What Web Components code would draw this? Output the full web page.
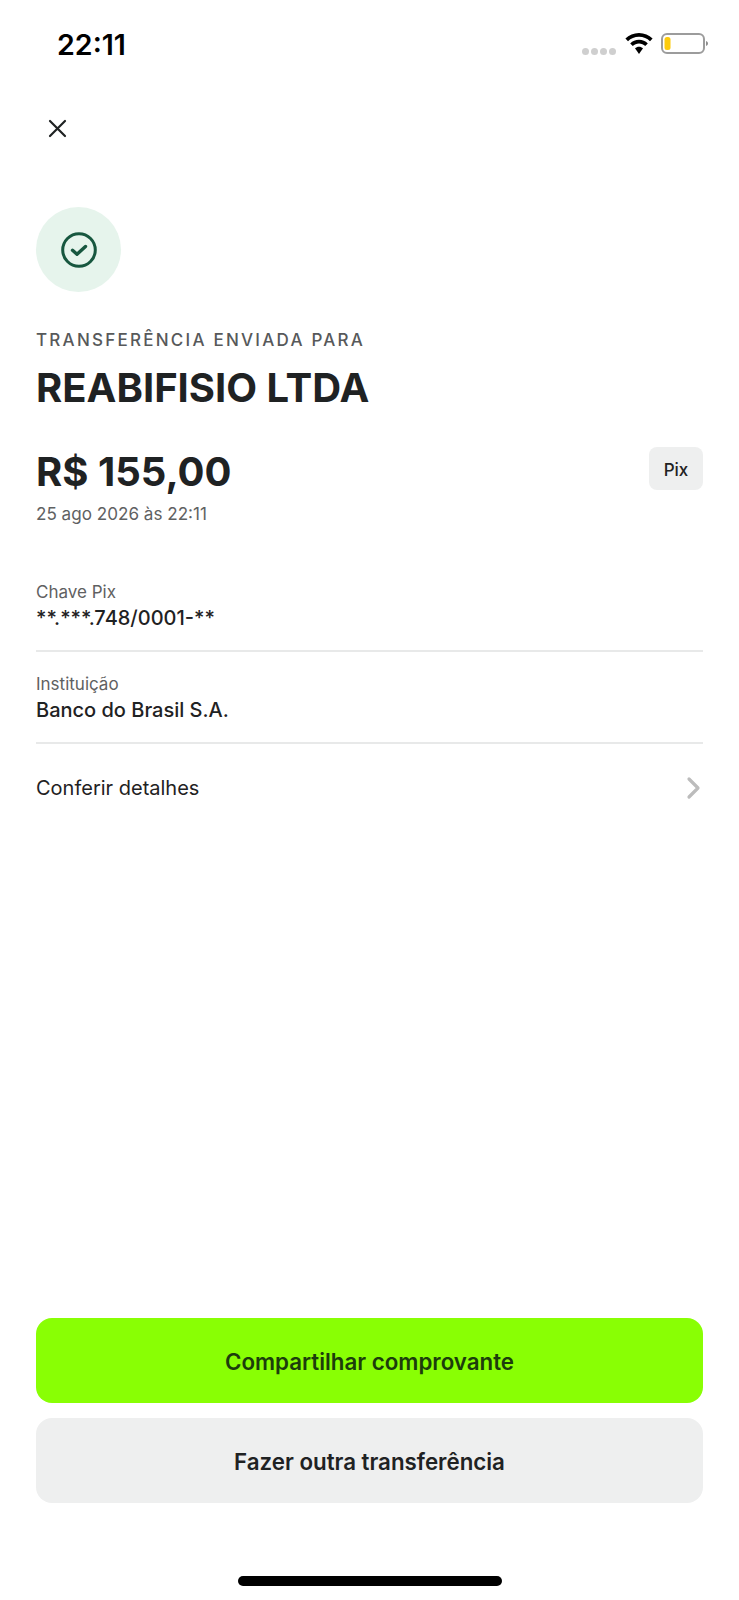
<!DOCTYPE html>
<html lang="pt-BR">
<head>
<meta charset="utf-8">
<title>Transferência enviada</title>
<style>
  html, body { margin: 0; background: #fff; }
  body { font-family: Inter, "Liberation Sans", sans-serif; color: #1f2223; }
</style>
</head>
<body>
<receipt-screen>
  <status-bar slot="status" time="22:11"></status-bar>
  <close-button slot="nav"></close-button>
  <success-badge></success-badge>
  <amount-summary label="Transferência enviada para" name="REABIFISIO LTDA" amount="R$ 155,00" date="25 ago 2026 às 22:11" tag="Pix"></amount-summary>
  <detail-row label="Chave Pix" value="**.***.748/0001-**"></detail-row>
  <detail-row label="Instituição" value="Banco do Brasil S.A."></detail-row>
  <link-row>Conferir detalhes</link-row>
  <action-button slot="actions" kind="primary">Compartilhar comprovante</action-button>
  <action-button slot="actions">Fazer outra transferência</action-button>
</receipt-screen>

<script>
const make = (html) => {
  const template = document.createElement("template");
  template.innerHTML = html;
  return template;
};

const screenTemplate = make(`
  <style>
    :host { display: flex; flex-direction: column; height: 1600px; box-sizing: border-box; overflow: hidden; }
    .nav { padding: 26px 36px 0; height: 70px; box-sizing: border-box; }
    .content { flex: 1; padding: 0 36px; display: flex; flex-direction: column; margin-top: 47px; }
    .actions { padding: 0 36px; display: flex; flex-direction: column; gap: 15px; }
    .home { height: 97px; display: flex; justify-content: center; align-items: flex-start; padding-top: 73px; box-sizing: border-box; }
    .home i { display: block; width: 264px; height: 10px; border-radius: 5px; background: #000; }
  </style>
  <slot name="status"></slot>
  <div class="nav"><slot name="nav"></slot></div>
  <div class="content"><slot></slot></div>
  <div class="actions"><slot name="actions"></slot></div>
  <div class="home"><i></i></div>
`);

class ReceiptScreen extends HTMLElement {
  constructor() {
    super();
    this.attachShadow({ mode: "open" }).appendChild(screenTemplate.content.cloneNode(true));
  }
}
customElements.define("receipt-screen", ReceiptScreen);

const statusTemplate = make(`
  <style>
    :host { display: flex; justify-content: space-between; align-items: flex-start; height: 90px; box-sizing: border-box; padding: 29px 31px 0 57px; }
    .time { font: 600 28.600px/32px Inter, "Liberation Sans", sans-serif; color: #000; }
    .icons { display: flex; align-items: flex-start; padding-top: 4px; }
    .dots { display: flex; gap: 2px; margin: 15px 9px 0 0; }
    .dots i { width: 7px; height: 7px; border-radius: 50%; background: #cfcfcf; }
    svg { display: block; }
    .wifi { margin-right: 8px; }
  </style>
  <span class="time"></span>
  <div class="icons">
    <div class="dots"><i></i><i></i><i></i><i></i></div>
    <svg class="wifi" width="28" height="21" viewBox="0 0 28 21" fill="#000">
      <path d="M14 0C8.700 0 3.900 2.100.4 5.600L3 8.200C5.800 5.400 9.700 3.700 14 3.700s8.200 1.700 11 4.500l2.600-2.600C24.100 2.100 19.300 0 14 0z"/>
      <path d="M14 6.800c-3.400 0-6.500 1.400-8.800 3.600l2.600 2.600c1.600-1.600 3.800-2.500 6.200-2.500s4.600.9 6.200 2.500l2.600-2.600c-2.300-2.200-5.400-3.600-8.800-3.600z"/>
      <path d="M14 13.700c-1.500 0-2.900.6-4 1.600l4 5.700 4-5.700c-1.100-1-2.500-1.600-4-1.600z"/>
    </svg>
    <svg width="47" height="21" viewBox="0 0 47 21">
      <rect x="1" y="1" width="42" height="19" rx="5" fill="none" stroke="#9c9c9c" stroke-width="2"/>
      <rect x="3.500" y="4" width="6" height="13" rx="2.500" fill="#fdcb0c"/>
      <path d="M45 8c1.300.4 2 1.300 2 2.500S46.300 12.600 45 13z" fill="#8e8e8e"/>
    </svg>
  </div>
`);

class StatusBar extends HTMLElement {
  constructor() {
    super();
    this.attachShadow({ mode: "open" }).appendChild(statusTemplate.content.cloneNode(true));
  }
  connectedCallback() {
    this.shadowRoot.querySelector(".time").textContent = this.getAttribute("time");
  }
}
customElements.define("status-bar", StatusBar);

const closeTemplate = make(`
  <style>
    :host { display: block; width: 40px; height: 24px; }
    svg { display: block; margin-left: 8px; }
  </style>
  <svg width="24" height="24" viewBox="0 0 24 24" fill="none" stroke="#1f2223" stroke-width="2.200" stroke-linecap="round">
    <path d="M6 5l15 15M21 5L6 20"/>
  </svg>
`);

class CloseButton extends HTMLElement {
  constructor() {
    super();
    this.attachShadow({ mode: "open" }).appendChild(closeTemplate.content.cloneNode(true));
  }
}
customElements.define("close-button", CloseButton);

const badgeTemplate = make(`
  <style>
    :host { display: flex; align-items: center; justify-content: center; width: 85px; height: 85px; margin-bottom: 1px; border-radius: 50%; background: #e6f4ec; }
    svg { display: block; }
  </style>
  <svg width="36" height="36" viewBox="0 0 36 36" fill="none" stroke="#17573f" stroke-linecap="round" stroke-linejoin="round">
    <circle cx="18" cy="18" r="16.300" stroke-width="3"/>
    <path d="M11.500 18.300l4.500 4 8.500-7.800" stroke-width="3.400"/>
  </svg>
`);

class SuccessBadge extends HTMLElement {
  constructor() {
    super();
    this.attachShadow({ mode: "open" }).appendChild(badgeTemplate.content.cloneNode(true));
  }
}
customElements.define("success-badge", SuccessBadge);

const summaryTemplate = make(`
  <style>
    :host { display: block; padding-top: 35px; margin-bottom: 34px; font-family: Inter, "Liberation Sans", sans-serif; }
    .label { font-size: 17px; line-height: 24px; font-weight: 500; letter-spacing: 2.240px; text-transform: uppercase; color: #57595a; }
    .name { font-size: 40px; line-height: 48px; font-weight: 700; color: #1f2223; margin-top: 12px; }
    .row { display: flex; justify-content: space-between; align-items: flex-start; margin-top: 35px; }
    .amount { font-size: 40px; line-height: 50px; font-weight: 700; color: #1f2223; }
    .date { font-size: 17.100px; line-height: 24px; color: #5f6162; margin-top: 5px; }
    .tag { width: 54px; height: 43px; padding-top: 2px; box-sizing: border-box; border-radius: 8px; background: #eeefef; display: flex; align-items: center; justify-content: center; font-size: 17px; font-weight: 500; color: #1f2223; }
  </style>
  <div class="label"></div>
  <div class="name"></div>
  <div class="row">
    <div>
      <div class="amount"></div>
      <div class="date"></div>
    </div>
    <div class="tag"></div>
  </div>
`);

class AmountSummary extends HTMLElement {
  constructor() {
    super();
    this.attachShadow({ mode: "open" }).appendChild(summaryTemplate.content.cloneNode(true));
  }
  connectedCallback() {
    ["label", "name", "amount", "date", "tag"].forEach(key => {
      this.shadowRoot.querySelector("." + key).textContent = this.getAttribute(key);
    });
  }
}
customElements.define("amount-summary", AmountSummary);

const rowTemplate = make(`
  <style>
    :host { display: block; height: 92px; box-sizing: border-box; border-bottom: 2px solid #e8e9e9; font-family: Inter, "Liberation Sans", sans-serif; padding-top: 20px; }
    .label { font-size: 17px; line-height: 24px; color: #5f6162; }
    .value { font-size: 20px; line-height: 28px; font-weight: 500; color: #1f2223; }
  </style>
  <div class="label"></div>
  <div class="value"></div>
`);

class DetailRow extends HTMLElement {
  constructor() {
    super();
    this.attachShadow({ mode: "open" }).appendChild(rowTemplate.content.cloneNode(true));
  }
  connectedCallback() {
    this.shadowRoot.querySelector(".label").textContent = this.getAttribute("label");
    this.shadowRoot.querySelector(".value").textContent = this.getAttribute("value");
  }
}
customElements.define("detail-row", DetailRow);

const linkTemplate = make(`
  <style>
    :host { display: flex; justify-content: space-between; align-items: center; height: 88px; font: 400 20px/26px Inter, "Liberation Sans", sans-serif; color: #1f2223; }
    svg { display: block; margin-right: 1px; }
  </style>
  <span><slot></slot></span>
  <svg width="16" height="24" viewBox="0 0 16 24" fill="none" stroke="#bcbcbc" stroke-width="3.200" stroke-linecap="round" stroke-linejoin="round">
    <path d="M3 3l9 9-9 9"/>
  </svg>
`);

class LinkRow extends HTMLElement {
  constructor() {
    super();
    this.attachShadow({ mode: "open" }).appendChild(linkTemplate.content.cloneNode(true));
  }
}
customElements.define("link-row", LinkRow);

const buttonTemplate = make(`
  <style>
    :host { display: flex; align-items: center; justify-content: center; height: 85px; padding-top: 2px; box-sizing: border-box; border-radius: 16px; background: #eeefef; color: #1f2223; font: 600 22.300px/28px Inter, "Liberation Sans", sans-serif; }
    :host([kind="primary"]) { background: #89ff04; color: #1c3d0c; }
  </style>
  <slot></slot>
`);

class ActionButton extends HTMLElement {
  constructor() {
    super();
    this.attachShadow({ mode: "open" }).appendChild(buttonTemplate.content.cloneNode(true));
  }
}
customElements.define("action-button", ActionButton);
</script>
</body>
</html>
